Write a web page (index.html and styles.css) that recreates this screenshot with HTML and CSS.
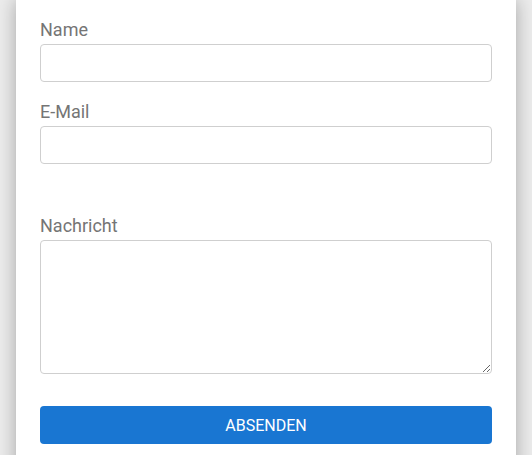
FILE: index.html
```html
<!DOCTYPE html>
<html lang="de">
<head>
  <meta charset="UTF-8" />
  <meta name="viewport" content="width=device-width, initial-scale=1.0" />
  <title>Kontakt</title>
  <link rel="stylesheet" href="styles.css">
</head>
<body>
  <form class="card">
    <div class="field">
      <label for="name">Name</label>
      <input id="name" type="text" />
    </div>
    <div class="field">
      <label for="email">E-Mail</label>
      <input id="email" type="email" />
    </div>
    <div class="spacer"></div>
    <div class="field">
      <label for="msg">Nachricht</label>
      <textarea id="msg"></textarea>
    </div>
    <button type="submit" class="send">ABSENDEN</button>
  </form>
</body>
</html>
```

FILE: styles.css
```css
* { box-sizing: border-box; }
html, body {
  margin: 0;
  padding: 0;
  background: #ececec;
  font-family: Roboto, 'Liberation Sans', sans-serif;
  overflow: hidden;
}
.card {
  width: 500px;
  margin: 0 16px;
  padding: 19px 24px 40px;
  background: #fff;
  box-shadow: 0 0 18px rgba(0, 0, 0, 0.3);
}
.field {
  margin-bottom: 19px;
}
.field label {
  display: block;
  font-size: 18px;
  line-height: 21px;
  margin-bottom: 4px;
  color: #757575;
}
.field input,
.field textarea {
  display: block;
  width: 100%;
  height: 38px;
  margin: 0;
  border: 1px solid #cfcfcf;
  border-radius: 4px;
  background: #fff;
  font: inherit;
}
.field textarea {
  height: 134px;
}
.spacer {
  height: 32px;
}
.send {
  display: block;
  width: 100%;
  height: 38px;
  margin-top: 32px;
  border: none;
  border-radius: 4px;
  background: #1976d2;
  color: #fff;
  font-family: Roboto, 'Liberation Sans', sans-serif;
  font-size: 16px;
  cursor: pointer;
}
```
